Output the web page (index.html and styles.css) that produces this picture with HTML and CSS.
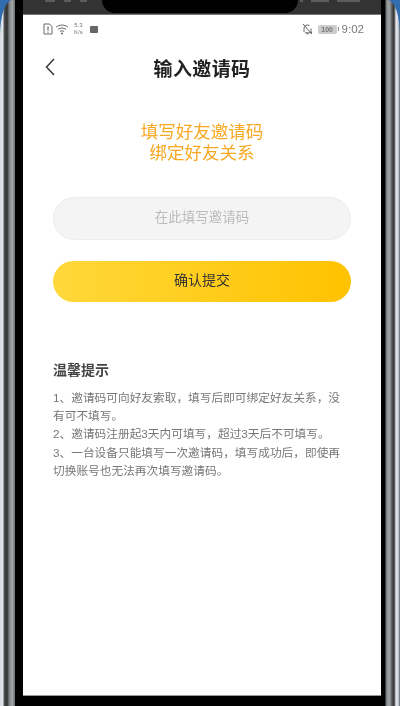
FILE: index.html
```html
<!DOCTYPE html>
<html lang="zh-CN">
<head>
    <meta charset="UTF-8">
    <meta name="viewport" content="width=device-width, initial-scale=1.0">
    <title>输入邀请码</title>
    <link rel="stylesheet" href="styles.css">
</head>
<body>
    <div class="phone">
        <div class="case">
            <div class="bezel">
                <div class="top-strip">
                    <div class="notch"></div>
                    <div class="strip-group strip-left"><i class="w10"></i><i class="w7"></i><i class="w7"></i></div>
                    <div class="strip-group strip-right"><i class="w3"></i><i class="w18"></i><i class="w23"></i></div>
                </div>
                <div class="screen">
                    <div class="status-bar">
                        <div class="status-left">
                            <svg class="icon-sim" width="10" height="12" viewBox="0 0 10 12">
                                <path d="M1 1h5.500L9 3.500V11H1z" fill="none" stroke="#666" stroke-width="1"/>
                                <path d="M5 3.500v4M5 8.500v1.200" stroke="#666" stroke-width="1.200"/>
                            </svg>
                            <svg class="icon-wifi" width="14" height="11" viewBox="0 0 14 11">
                                <path d="M1 3.200C4.500.4 9.500.4 13 3.200M3 5.400c2.400-1.900 5.600-1.900 8 0M5 7.500c1.200-.9 2.800-.9 4 0" fill="none" stroke="#666" stroke-width="1"/>
                                <circle cx="7" cy="9.500" r="1" fill="#666"/>
                            </svg>
                            <div class="speed">5.3<br>K/s</div>
                            <div class="app-dot"></div>
                        </div>
                        <div class="status-right">
                            <svg class="icon-bell" width="11" height="12" viewBox="0 0 11 12">
                                <path d="M2 9V5.500a3.500 3.500 0 0 1 5.500-2.900M9 5.500V9l1 .8H3M4.500 10.800h2" fill="none" stroke="#666" stroke-width="1"/>
                                <path d="M1 1l9 10" stroke="#666" stroke-width="1"/>
                            </svg>
                            <div class="battery"><span class="battery-level">100</span><span class="battery-tip"></span></div>
                            <span class="clock">9:02</span>
                        </div>
                    </div>

                    <div class="nav-bar">
                        <svg class="back" width="10" height="18" viewBox="0 0 10 18">
                            <path d="M9 1L1.500 9 9 17" fill="none" stroke="#333" stroke-width="1.400"/>
                        </svg>
                        <h1>输入邀请码</h1>
                    </div>

                    <div class="slogan">填写好友邀请码<br>绑定好友关系</div>

                    <div class="form">
                        <div class="code-input">在此填写邀请码</div>
                        <div class="submit-btn">确认提交</div>
                    </div>

                    <div class="tips">
                        <h3>温馨提示</h3>
                        <p>1、邀请码可向好友索取，填写后即可绑定好友关系，没有可不填写。</p>
                        <p>2、邀请码注册起3天内可填写，超过3天后不可填写。</p>
                        <p>3、一台设备只能填写一次邀请码，填写成功后，即使再切换账号也无法再次填写邀请码。</p>
                    </div>
                </div>
            </div>
        </div>
    </div>
</body>
</html>
```

FILE: styles.css
```css
html, body {
    margin: 0;
    height: 100%;
}

body {
    width: 400px;
    height: 706px;
    overflow: hidden;
    font-family: "Liberation Sans", "Noto Sans CJK SC", sans-serif;
    background: #fff;
}

.phone {
    height: 706px;
    background: #2f6db0;
    filter: blur(0.35px);
}

.case {
    box-sizing: border-box;
    height: 706px;
    padding: 0 15px;
    background: linear-gradient(90deg,
        #d8dce3 0, #e4e6ea 3px, #55565a 4px, #2e2e30 7px, #77787b 9px, #a8a9ac 12px, #6a6b6e 15px,
        #000 15px, #000 385px,
        #77787b 386px, #a8a9ac 389px, #5a5b5e 392px, #2e2e30 394px, #e4e6ea 396px, #d8dce3 398px, #59606e 400px);
    border-radius: 12px 12px 0 0 / 36px 36px 0 0;
}

.bezel {
    box-sizing: border-box;
    height: 706px;
    padding: 0 4px 10px 8px;
    background: #000;
    border-radius: 8px 8px 0 0;
}

.top-strip {
    position: relative;
    box-sizing: border-box;
    display: flex;
    justify-content: space-between;
    height: 15px;
    padding: 0 21px 0 22px;
    background: #333;
    border-bottom: 1px solid #777;
}

.notch {
    position: absolute;
    top: 0;
    left: 79px;
    width: 196px;
    height: 13px;
    background: #000;
    border-radius: 0 0 16px 16px;
}

.strip-group {
    display: flex;
}

.strip-left {
    gap: 9px;
}

.strip-right {
    gap: 8px;
}

.strip-group i {
    display: block;
    height: 2px;
    background: #5c5c5c;
}

.w3 { width: 3px; }
.w7 { width: 7px; }
.w10 { width: 10px; }
.w18 { width: 18px; }
.w23 { width: 23px; }

.screen {
    box-sizing: border-box;
    height: 681px;
    background: #fff;
    border-bottom: 1px solid #999;
}

.status-bar {
    display: flex;
    justify-content: space-between;
    align-items: center;
    height: 28px;
    padding: 0 17px 0 20px;
    color: #777;
}

.status-left, .status-right {
    display: flex;
    align-items: center;
}

.icon-wifi {
    margin-left: 2px;
}

.speed {
    margin-left: 5px;
    font-size: 6px;
    line-height: 7px;
    text-align: center;
}

.app-dot {
    width: 8px;
    height: 7px;
    margin-left: 7px;
    background: #666;
    border-radius: 1px;
}

.battery {
    display: flex;
    align-items: center;
    margin-left: 5px;
}

.battery-level {
    width: 19px;
    height: 9px;
    background: #ccc;
    border-radius: 2px;
    font-size: 7px;
    font-weight: bold;
    line-height: 9px;
    text-align: center;
}

.battery-tip {
    width: 1px;
    height: 4px;
    background: #888;
    margin-left: 1px;
}

.clock {
    margin-left: 3px;
    font-size: 11.500px;
}

.nav-bar {
    position: relative;
    display: flex;
    justify-content: center;
    align-items: center;
    height: 49px;
}

.nav-bar h1 {
    margin: -1px 0 0 0;
    font-size: 19px;
    font-weight: bold;
    letter-spacing: 0.4px;
    color: #222;
}

.back {
    position: absolute;
    left: 22px;
    top: 15px;
}

.slogan {
    margin-top: 30px;
    font-size: 17.500px;
    line-height: 21px;
    text-align: center;
    color: #f7a823;
}

.form {
    display: flex;
    flex-direction: column;
    gap: 21px;
    margin: 33px 30px 0 30px;
}

.code-input {
    box-sizing: border-box;
    height: 43px;
    background: #f4f4f4;
    border: 1px solid #ececec;
    border-radius: 22px;
    font-size: 13.500px;
    line-height: 40px;
    text-align: center;
    color: #bbb;
}

.submit-btn {
    height: 41px;
    background: linear-gradient(90deg, #ffd83a, #ffc200);
    border-radius: 21px;
    font-size: 14px;
    line-height: 39px;
    text-align: center;
    color: #333;
}

.tips {
    margin: 57px 30px 0 30px;
}

.tips h3 {
    margin: 0 0 10px 0;
    font-size: 14px;
    font-weight: bold;
    color: #444;
}

.tips p {
    margin: 0;
    font-size: 11.700px;
    line-height: 18.200px;
    color: #777;
}
```
